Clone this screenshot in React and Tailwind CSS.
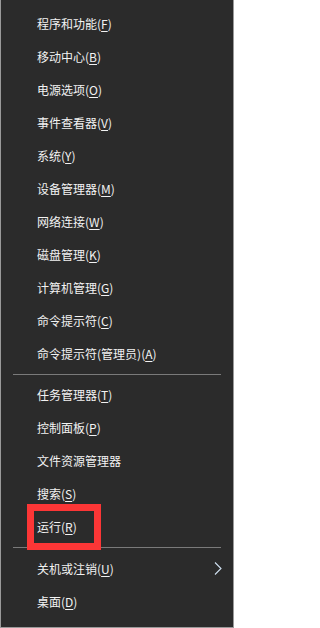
import React from "react";

const group1 = [
  ["程序和功能", "F"],
  ["移动中心", "B"],
  ["电源选项", "O"],
  ["事件查看器", "V"],
  ["系统", "Y"],
  ["设备管理器", "M"],
  ["网络连接", "W"],
  ["磁盘管理", "K"],
  ["计算机管理", "G"],
  ["命令提示符", "C"],
  ["命令提示符(管理员)", "A"],
];
const group2 = [
  ["任务管理器", "T"],
  ["控制面板", "P"],
  ["文件资源管理器", null],
  ["搜索", "S"],
  ["运行", "R", true],
];

function Item({ label, key2, boxed, arrow }) {
  return (
    <div className="relative h-[33px] flex items-center pl-[36px] pr-[12px] text-[12px] text-[#f2f2f2] leading-none">
      <span>
        {label}
        {key2 && (
          <>
            (<span className="underline underline-offset-[2px] decoration-[1px]">{key2}</span>)
          </>
        )}
      </span>
      {boxed && (
        <div className="absolute left-[26px] top-[-6px] w-[74px] h-[46px] border-[7px] border-[#fc3636]" />
      )}
      {arrow && (
        <svg className="absolute right-[11px] top-[10px]" width="8" height="13" viewBox="0 0 8 13">
          <path d="M1 0.5 L7 6.5 L1 12.5" fill="none" stroke="#cfe0f0" strokeWidth="1.1" />
        </svg>
      )}
    </div>
  );
}

function Sep({ h }) {
  return (
    <div className={`${h} flex items-center px-[12px]`}>
      <div className="h-px w-full bg-[#7a7a7a]" />
    </div>
  );
}

export default function App() {
  return (
    <div
      className="w-[234px] h-[628px] bg-[#2b2b2b] border-l border-r border-b border-[#9a9a9a] pt-[7px] flex flex-col"
      style={{ fontFamily: '"Noto Sans CJK SC", "Noto Sans", sans-serif' }}
    >
      {group1.map(([l, k]) => (
        <Item key={l} label={l} key2={k} />
      ))}
      <Sep h="h-[8px]" />
      {group2.map(([l, k, b]) => (
        <Item key={l} label={l} key2={k} boxed={b} />
      ))}
      <Sep h="h-[9px]" />
      <Item label="关机或注销" key2="U" arrow />
      <Item label="桌面" key2="D" />
    </div>
  );
}
